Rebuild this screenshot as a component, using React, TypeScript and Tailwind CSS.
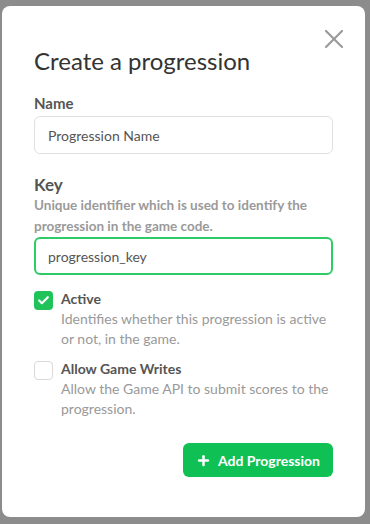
import { Check, Plus, X } from "lucide-react";

function CheckRow({
  checked,
  label,
  desc,
}: {
  checked: boolean;
  label: string;
  desc: string;
}) {
  return (
    <div className="flex gap-2">
      <div
        className={
          checked
            ? "mt-[2px] flex h-[19px] w-[19px] shrink-0 items-center justify-center rounded-[4px] bg-[#1fc35a]"
            : "mt-[2px] h-[19px] w-[19px] shrink-0 rounded-[4px] border border-[#d9d9d9] bg-white"
        }
      >
        {checked && <Check className="h-[13px] w-[13px] text-white" strokeWidth={4} />}
      </div>
      <div className="flex flex-col">
        <span className="text-[14px] leading-[20px] font-bold text-[#555]">{label}</span>
        <span className="text-[14px] leading-[20px] text-[#999]">{desc}</span>
      </div>
    </div>
  );
}

export default function App() {
  return (
    <div className="h-[524px] w-[370px] bg-[#8c8c8c] pt-[6px] pl-[2px] font-['Lato',sans-serif]">
      <div className="relative flex h-[511px] w-[363px] flex-col rounded-lg bg-white px-8">
        <button className="absolute top-[17px] right-[15px] text-[#9a9a9a]">
          <X className="h-[32px] w-[32px]" strokeWidth={1.6} />
        </button>

        <h1 className="mt-[39px] text-[24px] leading-[32px] font-normal text-[#333]">
          Create a progression
        </h1>

        <label className="mt-[16px] text-[15px] leading-[20px] font-bold text-[#555]">Name</label>
        <div className="mt-[3px] flex h-[38px] items-center rounded-md border border-[#e0e0e0] px-[13px] text-[14px] text-[#555]">
          Progression Name
        </div>

        <label className="mt-[21px] text-[17px] leading-[20px] font-bold text-[#555]">Key</label>
        <p className="mt-0 text-[13.5px] leading-[21px] font-bold text-[#9a9a9a]">
          Unique identifier which is used to identify the progression in the game code.
        </p>
        <div className="mt-0 flex h-[38px] items-center rounded-md border-2 border-[#2ecc65] px-[12px] text-[14px] text-[#555]">
          progression_key
        </div>

        <div className="mt-[14px] flex flex-col gap-[10px]">
          <CheckRow
            checked
            label="Active"
            desc="Identifies whether this progression is active or not, in the game."
          />
          <CheckRow
            checked={false}
            label="Allow Game Writes"
            desc="Allow the Game API to submit scores to the progression."
          />
        </div>

        <div className="mt-[24px] flex justify-end">
          <button className="flex h-[34px] items-center gap-[7px] rounded-md bg-[#0fc155] px-[13px] text-[14px] font-bold text-white">
            <Plus className="h-[15px] w-[15px]" strokeWidth={4} />
            Add Progression
          </button>
        </div>
      </div>
    </div>
  );
}
